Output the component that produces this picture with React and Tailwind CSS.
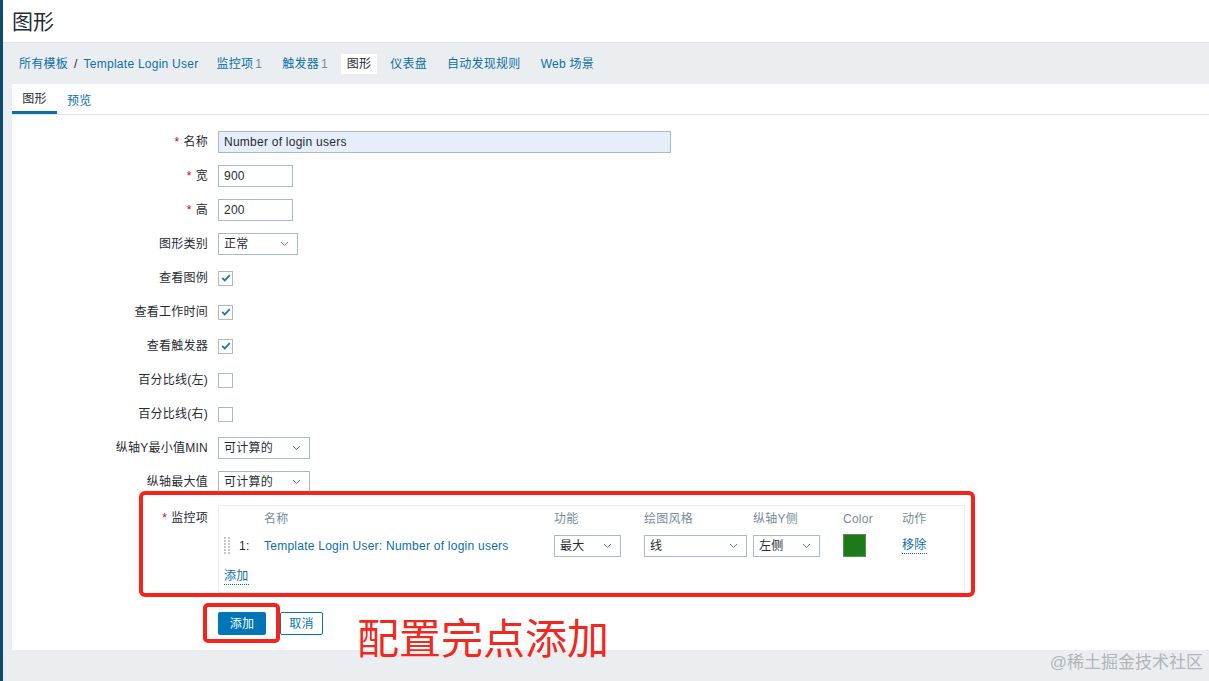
import React from "react";

const font = "font-['Liberation_Sans','Noto_Sans_CJK_SC',sans-serif]";

function Chevron() {
  return (
    <svg width="9" height="6" viewBox="0 0 9 6" className="shrink-0">
      <path d="M1 1 L4.5 4.5 L8 1" fill="none" stroke="#6b7c86" strokeWidth="1" />
    </svg>
  );
}

function Select({ value, width }) {
  return (
    <div
      className={`flex h-[22px] items-center justify-between border border-[#acbbc2] bg-white pl-[5px] pr-[8px] text-[12px] text-[#1f2c33] ${width}`}
    >
      <span>{value}</span>
      <Chevron />
    </div>
  );
}

function Checkbox({ checked }) {
  return (
    <div className="flex h-[15px] w-[15px] items-center justify-center border border-[#acbbc2] bg-white">
      {checked && (
        <svg width="10" height="8" viewBox="0 0 10 8">
          <path d="M1.2 4 L3.8 6.4 L8.8 1.2" fill="none" stroke="#1a78b4" strokeWidth="1.8" />
        </svg>
      )}
    </div>
  );
}

function Row({ label, required, children }) {
  return (
    <div className="mb-[12px] flex h-[22px] items-center">
      <div className="w-[196px] text-right text-[12px] text-[#1f2c33]">
        {required && <span className="mr-[4px] text-[#d40000]">*</span>}
        {label}
      </div>
      <div className="ml-[10px] flex items-center">{children}</div>
    </div>
  );
}

function DragHandle() {
  return (
    <svg width="7" height="18" viewBox="0 0 7 18">
      {[0, 1, 2, 3, 4, 5].map((r) =>
        [0, 1].map((c) => (
          <rect key={`${r}-${c}`} x={c * 4} y={r * 3} width="2" height="2" fill="#c1c9ce" />
        ))
      )}
    </svg>
  );
}

export default function App() {
  const navItems = [
    { label: "监控项", count: "1" },
    { label: "触发器", count: "1" },
    { label: "图形", active: true },
    { label: "仪表盘" },
    { label: "自动发现规则" },
    { label: "Web 场景" },
  ];

  return (
    <div className={`relative flex h-[681px] w-[1209px] overflow-hidden bg-[#ebeef0] tracking-[0.25px] ${font}`}>
      {/* left sidebar edge */}
      <div className="w-[3px] shrink-0 bg-[#0d4a70]" />

      <div className="flex flex-1 flex-col">
        {/* header */}
        <div className="flex h-[43px] items-center border-b border-[#dfe4e7] bg-white pl-[9px]">
          <h1 className="text-[21px] leading-none tracking-normal text-[#1f2c33]">图形</h1>
        </div>

        {/* breadcrumb / nav */}
        <div className="flex h-[41px] items-center pl-[16px] text-[12px]">
          <span className="text-[#0a6ea8]">所有模板</span>
          <span className="mx-[6px] text-[#1f2c33]">/</span>
          <span className="text-[#0a6ea8]">Template Login User</span>
          <div className="ml-[8px] flex items-center">
            {navItems.map((n) =>
              n.active ? (
                <span key={n.label} className="mx-[3px] flex h-[20px] items-center bg-white px-[6px] text-[#1f2c33]">
                  {n.label}
                </span>
              ) : (
                <span key={n.label} className="px-[10px] text-[#0a6ea8]">
                  {n.label}
                  {n.count && <span className="ml-[2px] text-[#768d99]">{n.count}</span>}
                </span>
              )
            )}
          </div>
        </div>

        {/* main panel */}
        <div className="ml-[9px] h-[566px] bg-white">
          <div className="flex h-[31px] border-b border-[#dfe4e7] text-[12px]">
            <div className="flex h-[30px] w-[45px] items-center justify-center border-b-[3px] border-[#0a6ea8] pt-[3px] text-[#1f2c33]">
              图形
            </div>
            <div className="flex h-[30px] items-center px-[10px] pt-[3px] text-[#0a6ea8]">预览</div>
          </div>

          <div className="pt-[16px]">
            <Row label="名称" required>
              <div className="flex h-[22px] w-[453px] items-center border border-[#acbbc2] bg-[#e6eef9] px-[5px] text-[12px] text-[#1f2c33]">
                Number of login users
              </div>
            </Row>
            <Row label="宽" required>
              <div className="flex h-[22px] w-[75px] items-center border border-[#acbbc2] px-[5px] text-[12px] text-[#1f2c33]">
                900
              </div>
            </Row>
            <Row label="高" required>
              <div className="flex h-[22px] w-[75px] items-center border border-[#acbbc2] px-[5px] text-[12px] text-[#1f2c33]">
                200
              </div>
            </Row>
            <Row label="图形类别">
              <Select value="正常" width="w-[80px]" />
            </Row>
            <Row label="查看图例">
              <Checkbox checked />
            </Row>
            <Row label="查看工作时间">
              <Checkbox checked />
            </Row>
            <Row label="查看触发器">
              <Checkbox checked />
            </Row>
            <Row label="百分比线(左)">
              <Checkbox />
            </Row>
            <Row label="百分比线(右)">
              <Checkbox />
            </Row>
            <Row label="纵轴Y最小值MIN">
              <Select value="可计算的" width="w-[92px]" />
            </Row>
            <Row label="纵轴最大值">
              <Select value="可计算的" width="w-[92px]" />
            </Row>

            {/* items table */}
            <div className="mb-[19px] flex items-start">
              <div className="w-[196px] pt-[4px] text-right text-[12px] text-[#1f2c33]">
                <span className="mr-[4px] text-[#d40000]">*</span>监控项
              </div>
              <div className="ml-[10px] h-[88px] w-[747px] border border-[#ebeef0] pl-[5px] pt-[4px] text-[12px]">
                <div className="grid h-[18px] grid-cols-[15px_25px_290px_90px_109px_90px_59px_1fr] items-center text-[#768d99]">
                  <span />
                  <span />
                  <span>名称</span>
                  <span>功能</span>
                  <span>绘图风格</span>
                  <span>纵轴Y侧</span>
                  <span>Color</span>
                  <span>动作</span>
                </div>
                <div className="mt-[6px] grid h-[22px] grid-cols-[15px_25px_290px_90px_109px_90px_59px_1fr] items-center">
                  <DragHandle />
                  <span className="text-[#1f2c33]">1:</span>
                  <span className="text-[#0a6ea8]">Template Login User: Number of login users</span>
                  <Select value="最大" width="w-[67px]" />
                  <Select value="线" width="w-[103px]" />
                  <Select value="左侧" width="w-[67px]" />
                  <div className="h-[23px] w-[23px] border border-[#5a8f5a] bg-[#1d7a1a]" />
                  <span className="w-fit border-b border-dotted border-[#0a6ea8] leading-[15px] text-[#0a6ea8]">移除</span>
                </div>
                <div className="mt-[13px] w-fit border-b border-dotted border-[#0a6ea8] leading-[15px] text-[#0a6ea8]">
                  添加
                </div>
              </div>
            </div>

            {/* buttons */}
            <div className="ml-[206px] flex items-center gap-[14px] text-[12px]">
              <button className="h-[23px] w-[48px] rounded-[2px] bg-[#0275b8] text-white">添加</button>
              <button className="h-[23px] w-[43px] rounded-[2px] border border-[#0275b8] bg-white text-[#0275b8]">
                取消
              </button>
            </div>
          </div>
        </div>
      </div>

      {/* red annotations */}
      <div className="pointer-events-none absolute left-[139px] top-[491px] h-[106px] w-[836px] rounded-[6px] border-[4px] border-[#f4241c]" />
      <div className="pointer-events-none absolute left-[203px] top-[603px] h-[40px] w-[77px] rounded-[5px] border-[4px] border-[#f4241c]" />
      <div className="absolute left-[357px] top-[619px] text-[42px] leading-none tracking-normal text-[#f0281e]">配置完点添加</div>

      {/* watermark */}
      <div className="absolute bottom-[6px] right-[6px] text-[17px] tracking-normal text-[#b1b5b9]">@稀土掘金技术社区</div>
    </div>
  );
}
